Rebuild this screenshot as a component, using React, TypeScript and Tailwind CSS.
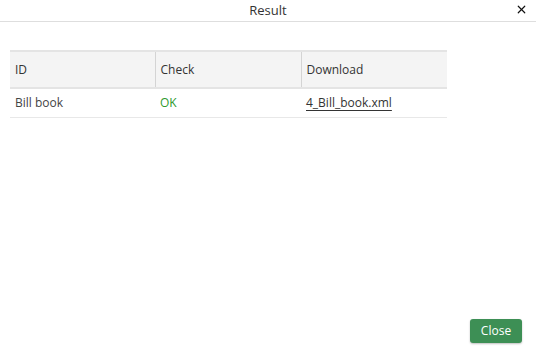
import React from "react";
import { X } from "lucide-react";

const ROWS = [{ id: "Bill book", check: "OK", file: "4_Bill_book.xml" }];

const App = () => {
  return (
    <div className="flex h-[355px] w-[536px] flex-col bg-white font-['Open_Sans',sans-serif] text-[12px] text-[#333]">
      <div className="relative flex h-[22px] shrink-0 items-center justify-center border-b border-[#dedede]">
        <span className="text-[13px] text-[#333]">Result</span>
        <button className="absolute right-[8px] top-[3px] text-[#111]">
          <X size={13} strokeWidth={2.2} />
        </button>
      </div>

      <div className="flex-1 px-[10px] pt-[28px]">
        <table className="w-[437px] table-fixed border-collapse">
          <thead>
            <tr className="h-[37px] border-y-2 border-[#e4e4e4] bg-[#f4f4f4] text-left">
              <th className="w-[145px] px-[5px] font-normal">ID</th>
              <th className="w-[146px] border-l border-[#d4d4d4] px-[5px] font-normal">Check</th>
              <th className="border-l border-[#d4d4d4] px-[5px] font-normal">Download</th>
            </tr>
          </thead>
          <tbody>
            {ROWS.map((r) => (
              <tr key={r.id} className="h-[29px] border-b border-[#e8e8e8]">
                <td className="px-[5px] text-[#444]">{r.id}</td>
                <td className="px-[5px] text-[#2e9a2e]">{r.check}</td>
                <td className="px-[5px]">
                  <a className="text-[#333] underline underline-offset-[3px]" href="#">
                    {r.file}
                  </a>
                </td>
              </tr>
            ))}
          </tbody>
        </table>
      </div>

      <div className="flex justify-end pb-[12px] pr-[14px]">
        <button className="h-[24px] w-[52px] rounded-[3px] bg-[#3d8f55] text-[12px] text-white shadow-[0_1px_2px_rgba(0,0,0,0.25)]">
          Close
        </button>
      </div>
    </div>
  );
};

export default App;
